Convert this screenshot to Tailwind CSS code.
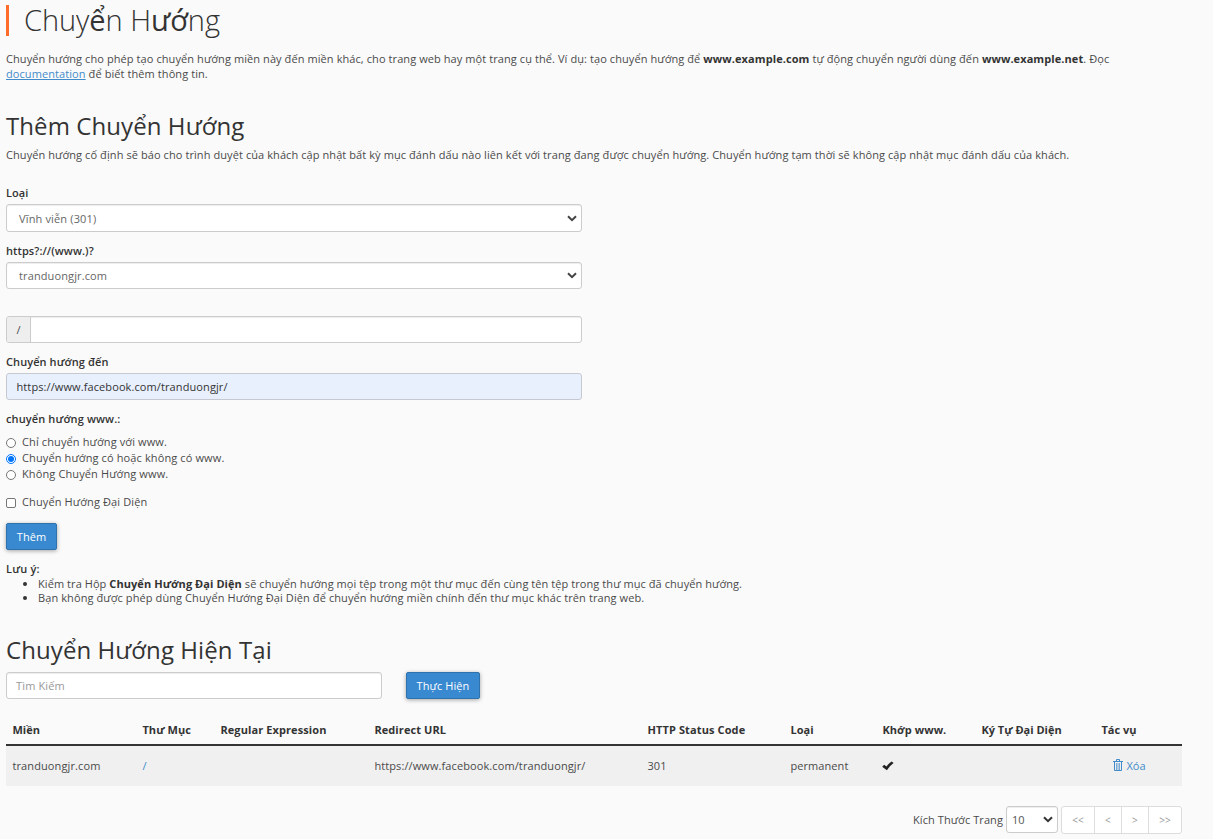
<!DOCTYPE html>
<html lang="vi">
<head>
<meta charset="utf-8">
<title>Chuyển Hướng</title>
<script src="https://cdn.jsdelivr.net/npm/@tailwindcss/browser@4"></script>
</head>
<body class="h-[839px] overflow-hidden bg-[#fafafa] pl-1.5 pt-[5px] font-['Open_Sans',sans-serif] text-[11px] leading-[15px] tracking-[0.083px] text-[#4a4a4a]">
<h1 class="flex h-[31px] items-center border-l-3 border-[#ff6c2c] pl-[15px] text-[29px] leading-[31px] font-light tracking-[-0.05px] text-[#333]"><span class="-mt-0.5 whitespace-nowrap">Chuy<span class="font-normal">ể</span>n H<span class="font-normal">ướ</span>ng</span></h1>
<p class="mt-[15px] h-[31px] whitespace-nowrap"><span>Chuyển hướng cho phép tạo chuyển hướng miền này đến miền khác, cho trang web hay một trang cụ thể. Ví dụ: tạo chuyển hướng để <b class="text-[#333]">www.example.com</b> tự động chuyển người dùng đến <b class="text-[#333]">www.example.net</b>. Đọc</span><br><a class="text-[#428bca] underline">documentation</a> để biết thêm thông tin.</p>
<h2 class="mt-7 h-8 text-2xl leading-8 text-[#333]"><span>Thêm Chuyển Hướng</span></h2>
<p class="mt-[5px] h-[15px] whitespace-nowrap"><span>Chuyển hướng cố định sẽ báo cho trình duyệt của khách cập nhật bất kỳ mục đánh dấu nào liên kết với trang đang được chuyển hướng. Chuyển hướng tạm thời sẽ không cập nhật mục đánh dấu của khách.</span></p>

<form class="w-[576px]">
  <label class="mt-[23px] block h-[19px] font-semibold text-[#333]">Loại</label>
  <div class="flex h-7 items-center justify-between rounded-[3px] border border-[#ccc] bg-white pr-1 pl-3 text-[#666] shadow-[inset_0_1px_1px_rgba(0,0,0,0.075)]"><span class="tracking-[0.15px]">Vĩnh viễn (301)</span><svg class="h-[7px] w-[10px]" viewBox="0 0 10 7" fill="none" stroke="#444" stroke-width="2"><path d="M1 1.2 5 5.2 9 1.2"/></svg></div>
  <label class="mt-[11px] block h-[19px] font-semibold text-[#333]">https?://(www.)?</label>
  <div class="flex h-[27px] items-center justify-between rounded-[3px] border border-[#ccc] bg-white pr-1 pl-3 text-[#666] shadow-[inset_0_1px_1px_rgba(0,0,0,0.075)]"><span class="tracking-[0.12px]">tranduongjr.com</span><svg class="h-[7px] w-[10px]" viewBox="0 0 10 7" fill="none" stroke="#444" stroke-width="2"><path d="M1 1.2 5 5.2 9 1.2"/></svg></div>
  <div class="mt-[27px] flex h-[27px] overflow-hidden rounded-[3px] border border-[#ccc] bg-white"><span class="flex w-6 items-center justify-center border-r border-[#ccc] bg-[#eee]">/</span><span class="flex-1 shadow-[inset_0_1px_1px_rgba(0,0,0,0.075)]"></span></div>
  <label class="mt-[11px] block h-[19px] font-semibold text-[#333]">Chuyển hướng đến</label>
  <div class="flex h-[27px] items-center rounded-[3px] border border-[#c6cad0] bg-[#e8f0fe] pl-[9.5px] text-[#333]"><span class="tracking-[0.1px]">https://www.facebook.com/tranduongjr/</span></div>
  <div class="mt-[11px] h-[23px] font-semibold tracking-[0.12px] text-[#333]">chuyển hướng www.:</div>
  <div class="flex h-4 items-center gap-1.5"><span class="mt-px size-[10px] rounded-full border border-[#767676] bg-white"></span><span class="-mt-px tracking-[0.12px]">Chỉ chuyển hướng với www.</span></div>
  <div class="flex h-4 items-center gap-1.5"><span class="mt-px flex size-[10px] items-center justify-center rounded-full border border-[#0075ff] bg-white"><i class="size-1.5 rounded-full bg-[#0075ff]"></i></span><span class="-mt-px tracking-[0.12px]">Chuyển hướng có hoặc không có www.</span></div>
  <div class="flex h-4 items-center gap-1.5"><span class="mt-px size-[10px] rounded-full border border-[#767676] bg-white"></span><span class="-mt-px tracking-[0.12px]">Không Chuyển Hướng www.</span></div>
  <div class="mt-3 flex h-4 items-center gap-1.5"><span class="mt-px size-[10px] rounded-[2px] border border-[#767676] bg-white"></span><span class="-mt-px tracking-[0.12px]">Chuyển Hướng Đại Diện</span></div>
  <div class="mt-[13px] flex h-[27px] w-[51px] items-center justify-center rounded-[2px] border border-[#2f72ac] bg-[#3889cf] text-white shadow-[0_1px_4px_rgba(0,0,0,0.35)]">Thêm</div>
</form>

<div class="mt-[11px] h-4 font-semibold tracking-[0.2px] text-[#333]">Lưu ý:</div>
<ul class="leading-[14px] tracking-[0.07px] whitespace-nowrap">
  <li class="flex items-center"><i class="ml-[17px] size-1 rounded-full bg-[#333]"></i><span class="ml-[11px]">Kiểm tra Hộp <b class="text-[#333]">Chuyển Hướng Đại Diện</b> sẽ chuyển hướng mọi tệp trong một thư mục đến cùng tên tệp trong thư mục đã chuyển hướng.</span></li>
  <li class="flex items-center"><i class="ml-[17px] size-1 rounded-full bg-[#333]"></i><span class="ml-[11px] tracking-[0.095px]">Bạn không được phép dùng Chuyển Hướng Đại Diện để chuyển hướng miền chính đến thư mục khác trên trang web.</span></li>
</ul>

<h2 class="mt-[29px] h-[38px] text-2xl leading-8 text-[#333]"><span>Chuyển Hướng Hiện Tại</span></h2>
<div class="flex h-[27px] gap-6">
  <div class="flex w-[376px] items-center rounded-[3px] border border-[#ccc] bg-white pl-[9px] tracking-[0.15px] text-[#999] shadow-[inset_0_1px_1px_rgba(0,0,0,0.075)]">Tìm Kiếm</div>
  <div class="flex w-[74px] items-center justify-center rounded-[2px] border border-[#2f72ac] bg-[#3889cf] text-white shadow-[0_1px_4px_rgba(0,0,0,0.35)]"><span class="whitespace-nowrap">Thực Hiện</span></div>
</div>

<div class="mt-[17px] w-[1176px] whitespace-nowrap">
  <div class="grid h-[30px] grid-cols-[130px_78px_154px_273px_143px_92px_99px_120px_87px] border-b-2 border-[#333] pt-1.5 pl-[6.4px] font-bold text-[#333]">
    <span>Miền</span><span>Thư Mục</span><span class="tracking-[0.1px]">Regular Expression</span><span>Redirect URL</span><span class="tracking-[0.12px]">HTTP Status Code</span><span>Loại</span><span>Khớp www.</span><span class="tracking-normal">Ký Tự Đại Diện</span><span class="tracking-normal">Tác vụ</span>
  </div>
  <div class="grid h-10 grid-cols-[130px_78px_154px_273px_143px_92px_99px_120px_87px] items-center bg-[#f0f0f0] pb-px pl-[6.4px]">
    <span class="tracking-[0.12px]">tranduongjr.com</span><span class="text-[#428bca]">/</span><span></span><span class="tracking-[0.1px]">https://www.facebook.com/tranduongjr/</span><span>301</span><span>permanent</span>
    <svg class="h-[10px] w-3" viewBox="0 0 12 10"><path d="M.2 5.8 2.2 3.8 4.4 5.6Q6.5 2.6 9.6.4L11.6 1.9Q7.2 5 4.9 9.2Z" fill="#222"/></svg>
    <span></span>
    <span class="flex items-center gap-[3px] pl-3 text-[#428bca]"><svg class="-mt-px h-3 w-[10px]" viewBox="0 0 10 12" fill="none" stroke="#428bca"><path d="M3.5 2V.5h3V2M0 2.5h10M1.5 3v8.5h7V3"/><path d="M3.5 4v7M5 4v7M6.5 4v7" stroke-width=".7"/></svg><span>Xóa</span></span>
  </div>
</div>

<div class="mt-5 flex h-7 w-[1176px] items-start justify-end">
  <span class="mt-1.5 mr-[3px] whitespace-nowrap">Kích Thước Trang</span>
  <div class="flex h-[27px] w-[52px] items-center justify-between rounded-[3px] border border-[#ccc] bg-white pr-1 pl-[5px] text-[#555] shadow-[inset_0_1px_1px_rgba(0,0,0,0.075)]"><span>10</span><svg class="h-[7px] w-[10px]" viewBox="0 0 10 7" fill="none" stroke="#333" stroke-width="2"><path d="M1 1.2 5 5.2 9 1.2"/></svg></div>
  <div class="ml-[3px] grid h-7 w-[121px] grid-cols-[33px_27px_27px_32px] divide-x divide-[#ddd] rounded-[3px] border border-[#ddd] bg-white text-center text-[10px] leading-[27px] text-[#999]"><span>&lt;&lt;</span><span>&lt;</span><span>&gt;</span><span>&gt;&gt;</span></div>
</div>
</body>
</html>
